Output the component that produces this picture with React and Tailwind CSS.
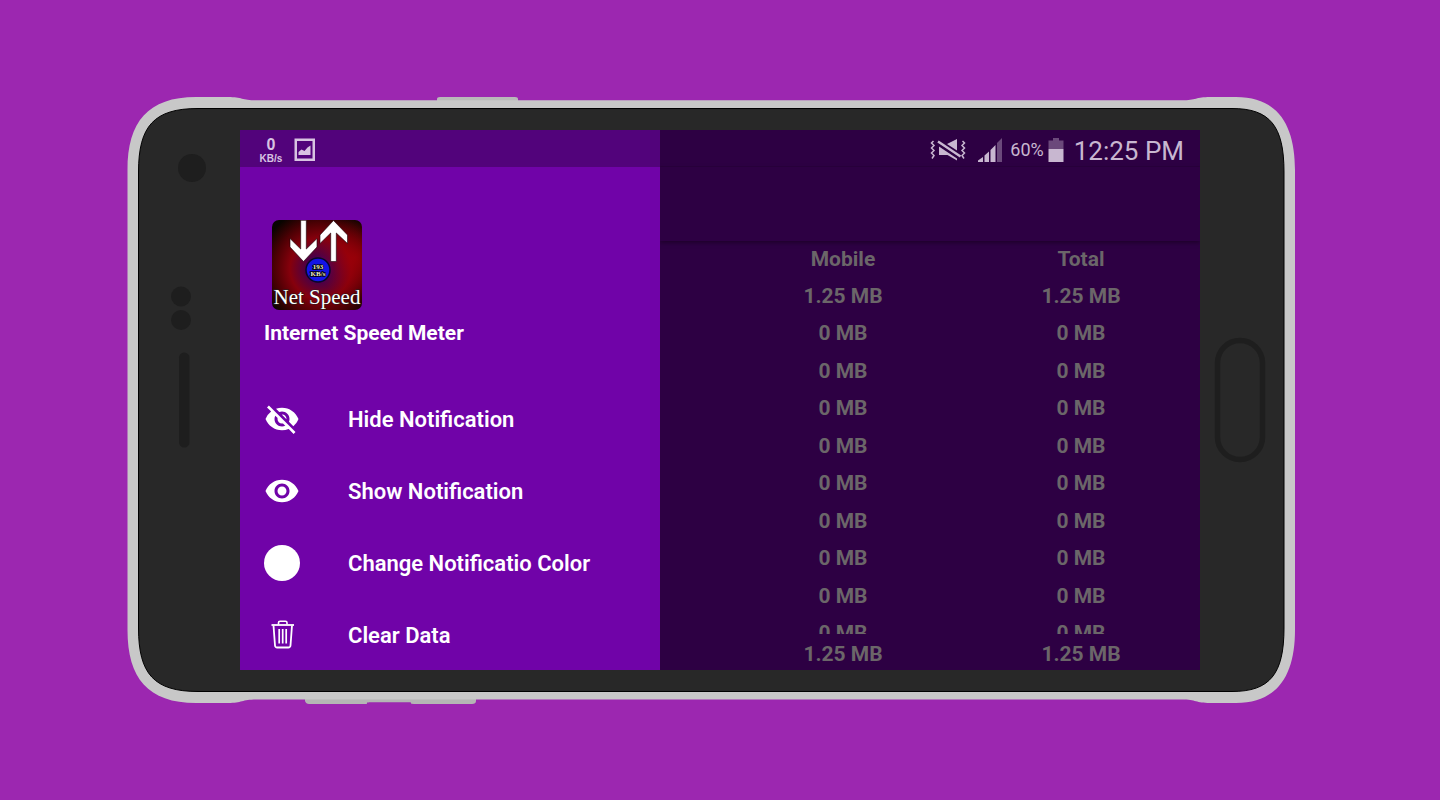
import React from "react";
import { MdVisibility, MdVisibilityOff } from "react-icons/md";

const rows = [
  { mobile: "1.25 MB", total: "1.25 MB" },
  ...Array.from({ length: 9 }, () => ({ mobile: "0 MB", total: "0 MB" })),
];

function TrashIcon() {
  return (
    <svg
      viewBox="0 0 36 36"
      className="size-9"
      fill="none"
      stroke="currentColor"
      strokeLinejoin="round"
      aria-hidden="true"
    >
      <path d="M7.500 8H30" strokeWidth="1.8" />
      <path d="M14.500 7.500V5.700Q14.500 4.200 16 4.200H21.500Q23 4.200 23 5.700V7.500" strokeWidth="1.6" />
      <path d="M9.500 8.500L11 28.500Q11.200 30.500 13.200 30.500H24.300Q26.300 30.500 26.500 28.500L28 8.500" strokeWidth="1.8" />
      <path d="M15.200 12V26.500M18.700 12V26.500M22.200 12V26.500" strokeWidth="1.7" />
    </svg>
  );
}

const menu = [
  { name: "Hide Notification", icon: <MdVisibilityOff className="size-9" /> },
  { name: "Show Notification", icon: <MdVisibility className="size-9" /> },
  {
    name: "Change Notificatio Color",
    icon: <span className="block size-9 rounded-full bg-white" />,
  },
  { name: "Clear Data", icon: <TrashIcon /> },
];

function PhoneBody() {
  return (
    <svg
      viewBox="128 96 1168 608"
      preserveAspectRatio="none"
      className="absolute inset-0 h-full w-full overflow-visible"
      aria-hidden="true"
    >
      {/* side buttons */}
      <path d="M437 102V99Q437 97 440 97H515Q518 97 518 99V102Z" fill="#b9b9b9" />
      <path d="M305 698V701Q306 704 309 704H364Q368 704 369 702.500H410Q411 704 414 704H472Q476 704 476 701V698Z" fill="#b5b5b5" />
      <path d="M367 702.500H411V706H367Z" fill="#9c27b0" />
      <path
        d="M127.500 170C127.500 122 148 97 196 97H228C242 97 242 100.300 256 100.300H1182C1196 100.300 1196 97 1210 97H1236C1280 97 1295 128 1295 170V630C1295 672 1280 703 1236 703H1210C1196 703 1196 699.500 1182 699.500H256C242 699.500 242 703 228 703H196C148 703 127.500 678 127.500 630Z"
        fill="#c8c8c8"
      />
      <path
        d="M138.500 172C138.500 126 154 108.500 198 108.500H1232C1270 108.500 1284 126 1284 172V628C1284 674 1270 691.500 1232 691.500H198C154 691.500 138.500 674 138.500 628Z"
        fill="#282828"
        stroke="#000"
      />
      <g fill="#1e1e1e">
        <circle cx="192" cy="168" r="14" />
        <circle cx="181" cy="296.500" r="10" />
        <circle cx="181" cy="320" r="10" />
        <rect x="179" y="352.500" width="10.500" height="95" rx="5.200" />
      </g>
      <rect x="1217.500" y="340.500" width="45" height="119" rx="22.500" fill="none" stroke="#1e1e1e" strokeWidth="5.500" />
    </svg>
  );
}

function AppLogo() {
  return (
    <svg viewBox="0 0 90 90" className="ml-2 size-[90px]" role="img" aria-label="Net Speed">
      <defs>
        <radialGradient id="glow" cx="0.54" cy="0.54" r="0.68">
          <stop offset="0" stopColor="#3a0090" />
          <stop offset="0.22" stopColor="#4a0048" />
          <stop offset="0.5" stopColor="#86000c" />
          <stop offset="0.75" stopColor="#4c0004" />
          <stop offset="1" stopColor="#080400" />
        </radialGradient>
        <radialGradient id="side" cx="0.92" cy="0.42" r="0.45">
          <stop offset="0" stopColor="#a00008" stopOpacity="0.8" />
          <stop offset="1" stopColor="#a00008" stopOpacity="0" />
        </radialGradient>
      </defs>
      <rect width="90" height="90" rx="7" fill="url(#glow)" />
      <rect width="90" height="90" rx="7" fill="url(#side)" />
      <g fill="#fff" stroke="#1a0008" strokeWidth="0.6">
        <path d="M28.700 0.300H34.300V29L45 18.500V27L31.500 41.500L18 27V18.500L28.700 29Z" />
        <path d="M58.700 41.500V13L48 23.500V15L61.500 0.500L75.500 15V23.500L64.300 13V41.500Z" />
      </g>
      <circle cx="46" cy="50" r="12" fill="#1414e6" stroke="#08082a" strokeWidth="1.5" />
      <g fontFamily="'Liberation Serif', serif" fontWeight="700" textAnchor="middle">
        <text x="46" y="49" fontSize="7" fill="#f0f0d0" stroke="#000" strokeWidth="1.6" paintOrder="stroke">
          193
        </text>
        <text x="46" y="55.500" fontSize="7" fill="#f0f0d0" stroke="#000" strokeWidth="1.6" paintOrder="stroke">
          KB/s
        </text>
      </g>
      <text
        x="45"
        y="84"
        fontSize="21"
        fontFamily="'Liberation Serif', serif"
        textAnchor="middle"
        fill="#fff"
        stroke="#222"
        strokeWidth="1"
        paintOrder="stroke"
      >
        Net Speed
      </text>
    </svg>
  );
}

function PictureIcon() {
  return (
    <svg viewBox="0 0 22 24" className="h-6 w-[22px]" aria-hidden="true">
      <path d="M0.500 0.500H21V23H0.500ZM3 3V20.500H18.500V3Z" fill="currentColor" fillRule="evenodd" />
      <path d="M4.500 17V14L7.500 11.500L10.500 13L13.500 9.500L16.500 7.500V17Z" fill="currentColor" />
    </svg>
  );
}

function VibrateIcon() {
  return (
    <svg viewBox="0 0 36 24" className="h-6 w-9" aria-hidden="true">
      <g fill="none" stroke="currentColor" strokeWidth="1.500">
        <path d="M3.500 3L1.500 5L4 7.500L1.500 10L4 12.500L1.500 15L4 17.500L2 20.500" />
        <path d="M32.500 3L34.500 5L32 7.500L34.500 10L32 12.500L34.500 15L32 17.500L34 20.500" />
      </g>
      {/* muted speaker, cut by the slash */}
      <path d="M17 6L27 1V12.500ZM9 8.500L27 20.500V22.500L17.500 17H9Z" fill="currentColor" />
      <path d="M8 3.500L30.500 18.500" stroke="currentColor" strokeWidth="2.400" />
      <path d="M8 6.200L29 20.200" stroke="#2d0043" strokeWidth="1.300" />
    </svg>
  );
}

function SignalIcon() {
  return (
    <svg viewBox="0 0 24 24" className="size-6" aria-hidden="true">
      <g fill="currentColor">
        <path d="M0 24V22.500L5 19V24Z" />
        <path d="M6.500 24V17.500L11 13.500V24Z" />
        <path d="M12.500 24V12L17.500 7V24Z" />
        <path d="M19 24V5L24 0V24Z" opacity="0.4" />
      </g>
    </svg>
  );
}

function BatteryIcon() {
  return (
    <svg viewBox="0 0 16 24" className="h-6 w-4" aria-hidden="true">
      <path d="M0.500 2.500H5V0H11V2.500H15.500V11H0.500Z" fill="currentColor" opacity="0.4" />
      <path d="M0.500 11H15.500V24H0.500Z" fill="currentColor" />
    </svg>
  );
}

function Drawer() {
  return (
    <aside className="flex w-[43.75%] flex-col overflow-hidden bg-[#7003a8] text-white">
      <div className="flex h-[37px] shrink-0 items-center gap-3 bg-[#52037b] pt-0.5 pl-5 text-[#d8c3e2]">
        <div className="flex w-[22px] flex-col items-center pt-0.5 font-['Liberation_Sans',sans-serif] font-bold">
          <span className="text-base leading-4">0</span>
          <span className="text-[10px] leading-3">KB/s</span>
        </div>
        <PictureIcon />
      </div>
      <div className="shrink-0 px-6 pt-[53px] pb-[34px]">
        <AppLogo />
        <h1 className="pt-2 text-[21px] leading-[31px] font-bold">Internet Speed Meter</h1>
      </div>
      <nav className="flex flex-col">
        {menu.map((item) => (
          <button
            key={item.name}
            type="button"
            className="flex h-[72px] shrink-0 cursor-pointer items-center gap-12 px-6 text-left text-[22px] font-semibold whitespace-nowrap"
          >
            {item.icon}
            {item.name}
          </button>
        ))}
      </nav>
    </aside>
  );
}

function Usage() {
  return (
    <section className="flex min-h-0 flex-1 flex-col overflow-hidden bg-[#2d0043] text-[21px] leading-7 text-[#6b6669]">
      <div className="flex h-[37px] shrink-0 items-center justify-end border-b border-[#29003c] pt-1 pr-4 text-[#c8b7d0]">
        <VibrateIcon />
        <span className="ml-3">
          <SignalIcon />
        </span>
        <span className="ml-2 text-lg">60%</span>
        <span className="ml-1">
          <BatteryIcon />
        </span>
        <time className="ml-2.5 pt-0.5 text-[26px] leading-8">12:25 PM</time>
      </div>
      <div className="h-[74px] shrink-0 shadow-[0_2px_4px_#1f002c]" />
      <div className="min-h-0 flex-1 overflow-hidden pl-16">
        <table className="h-[411px] w-full table-fixed text-center">
          <thead>
            <tr className="h-9">
              <th className="p-0 font-bold">Mobile</th>
              <th className="p-0 font-bold">Total</th>
            </tr>
          </thead>
          <tbody className="font-bold">
            {rows.map((row, index) => (
              <tr key={index}>
                <td className="p-0">{row.mobile}</td>
                <td className="p-0">{row.total}</td>
              </tr>
            ))}
          </tbody>
        </table>
      </div>
      <div className="shrink-0 pl-16">
        <table className="w-full table-fixed text-center font-bold" aria-label="Sum">
          <tbody>
            <tr>
              <td className="pt-1.5 pb-0.5">1.25 MB</td>
              <td className="pt-1.5 pb-0.5">1.25 MB</td>
            </tr>
          </tbody>
        </table>
      </div>
    </section>
  );
}

export default function App() {
  return (
    <main className="flex min-h-screen items-center bg-[#9c27b0] pr-36 pl-32 font-[Roboto,sans-serif]">
      <div className="relative flex-1 py-[34px] pr-24 pl-28">
        <PhoneBody />
        <div className="relative flex aspect-video w-full overflow-hidden">
          <Drawer />
          <Usage />
        </div>
      </div>
    </main>
  );
}
